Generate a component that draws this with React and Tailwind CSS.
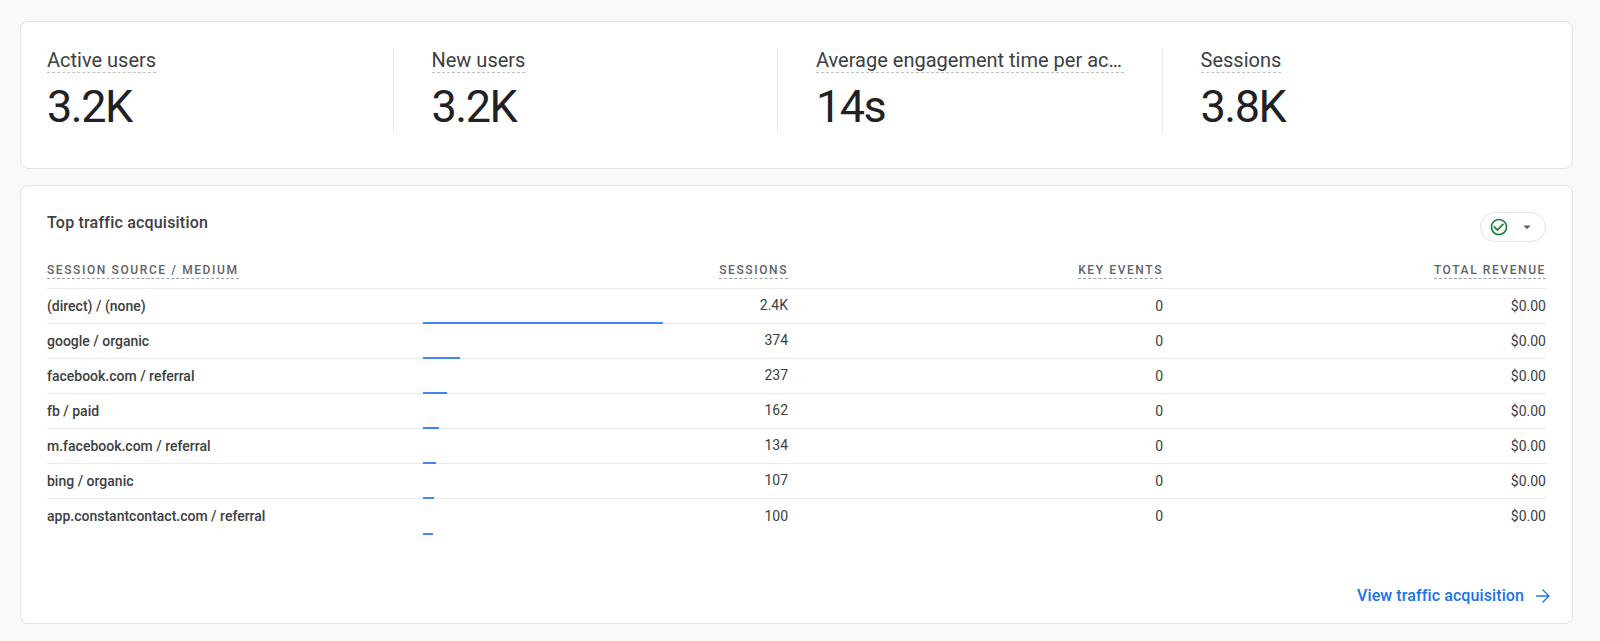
import React from "react";

const kpis = [
  { label: "Active users", value: "3.2K" },
  { label: "New users", value: "3.2K" },
  { label: "Average engagement time per active user", value: "14s" },
  { label: "Sessions", value: "3.8K" },
];

const rows = [
  ["(direct) / (none)", "2.4K", 240],
  ["google / organic", "374", 37.4],
  ["facebook.com / referral", "237", 23.7],
  ["fb / paid", "162", 16.2],
  ["m.facebook.com / referral", "134", 13.4],
  ["bing / organic", "107", 10.7],
  ["app.constantcontact.com / referral", "100", 10],
];

const grid = "grid grid-cols-[376px_365px_375px_1fr]";

function CheckCircle() {
  return (
    <svg width="20" height="20" viewBox="0 0 24 24" fill="#188038">
      <path d="M16.59 7.58L10 14.17l-3.59-3.58L5 12l5 5 8-8zM12 2C6.48 2 2 6.48 2 12s4.48 10 10 10 10-4.48 10-10S17.52 2 12 2zm0 18c-4.42 0-8-3.58-8-8s3.58-8 8-8 8 3.58 8 8-3.58 8-8 8z" />
    </svg>
  );
}

function DropDown() {
  return (
    <svg width="18" height="18" viewBox="0 0 24 24" fill="#5f6368">
      <path d="M7 10l5 5 5-5z" />
    </svg>
  );
}

function ArrowForward() {
  return (
    <svg width="22" height="22" viewBox="0 0 24 24" fill="#1a73e8">
      <path d="M12 4.5l-1.06 1.06 5.69 5.69H4.5v1.5h12.13l-5.69 5.69L12 19.5l7.5-7.5z" />
    </svg>
  );
}

function HeaderCell({ children, right }) {
  return (
    <div className={right ? "flex justify-end" : "flex"}>
      <span className="inline-block border-b border-dashed border-[#9aa0a6] text-[12px] leading-[16px] font-medium tracking-[1.6px] text-[#5f6368] uppercase">
        {children}
      </span>
    </div>
  );
}

export default function App() {
  return (
    <div className="min-h-[641px] bg-[#f8f9fa] pl-[20px] pr-[27px] pt-[21px] font-[Roboto,sans-serif]">
      {/* KPI card */}
      <div className="flex rounded-lg border border-[#e3e3e3] bg-white pl-[26px] pr-[26px] pt-[26px] pb-[35px]">
        {kpis.map((k, i) => (
          <div
            key={k.label}
            className={
              i === 0
                ? "flex-1 min-w-0"
                : "flex-1 min-w-0 border-l border-[#e8eaed] pl-[38px]"
            }
          >
            <div className="flex">
              <span className="inline-block max-w-[308px] truncate border-b border-dashed border-[#bdc1c6] text-[20px] leading-[24px] text-[#3c4043]">
                {k.label}
              </span>
            </div>
            <div className="mt-[8px] text-[45px] leading-[52px] tracking-[-1.5px] text-[#202124]">
              {k.value}
            </div>
          </div>
        ))}
      </div>

      {/* Traffic card */}
      <div className="mt-[16px] rounded-lg border border-[#e3e3e3] bg-white px-[26px] pt-[25px] pb-[16px]">
        <div className="flex items-start justify-between">
          <div className="mt-[2px] text-[16px] leading-[20px] font-medium tracking-[0.2px] text-[#3c4043]">
            Top traffic acquisition
          </div>
          <div className="mt-[1px] flex h-[30px] items-center gap-[9px] rounded-full border border-[#e3e3e3] pl-[8px] pr-[9px]">
            <CheckCircle />
            <DropDown />
          </div>
        </div>

        <div className={`${grid} mt-[20px] border-b border-[#e8eaed] pb-[9px]`}>
          <HeaderCell>Session source / medium</HeaderCell>
          <HeaderCell right>Sessions</HeaderCell>
          <HeaderCell right>Key events</HeaderCell>
          <HeaderCell right>Total revenue</HeaderCell>
        </div>

        {rows.map(([src, sess, bar], i) => (
          <div
            key={src}
            className={
              i === rows.length - 1
                ? `${grid} h-[35px] text-[14px] text-[#3c4043]`
                : `${grid} h-[35px] border-b border-[#e8eaed] text-[14px] text-[#3c4043]`
            }
          >
            <div className="flex items-center font-medium">{src}</div>
            <div className="flex flex-col">
              <div className="flex flex-1 items-center justify-end">{sess}</div>
              <div className="-mb-[1px] h-[2px] bg-[#4285f4]" style={{ width: `${bar}px` }} />
            </div>
            <div className="flex items-center justify-end">0</div>
            <div className="flex items-center justify-end">$0.00</div>
          </div>
        ))}

        <div className="-mr-[8px] mt-[51px] flex items-center justify-end gap-[8px]">
          <span className="text-[16px] leading-[20px] font-medium tracking-[0.1px] text-[#1a73e8]">
            View traffic acquisition
          </span>
          <ArrowForward />
        </div>
      </div>

      {/* Bottom cards */}
      <div className="mt-[17px] grid grid-cols-3 gap-[22px]">
        <div className="h-[200px] rounded-lg border border-[#e3e3e3] bg-white" />
        <div className="h-[200px] rounded-lg border border-[#e3e3e3] bg-white" />
        <div className="h-[200px] rounded-lg border border-[#e3e3e3] bg-white" />
      </div>
    </div>
  );
}
